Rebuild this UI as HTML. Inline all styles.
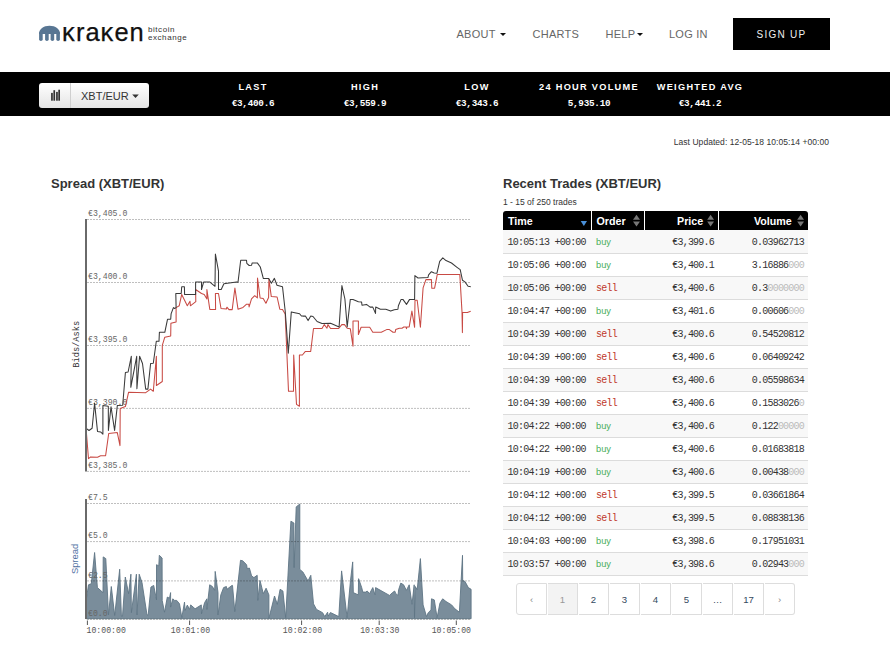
<!DOCTYPE html>
<html>
<head>
<meta charset="utf-8">
<style>
html,body{margin:0;padding:0;background:#fff;}
body{width:890px;height:672px;overflow:hidden;position:relative;font-family:"Liberation Sans",sans-serif;color:#333;}
.abs{position:absolute;}
.nav{position:absolute;top:28px;font-size:11px;color:#666;letter-spacing:0.25px;white-space:nowrap;line-height:13px;}
.caret{display:inline-block;width:0;height:0;border-left:2.6px solid transparent;border-right:2.6px solid transparent;border-top:3px solid #333;vertical-align:middle;margin-left:3px;position:relative;top:-1px;}
.signup{position:absolute;left:733px;top:18px;width:97px;height:32px;background:#000;color:#eee;font-size:10px;letter-spacing:1.25px;text-align:center;line-height:34px;}
.bar{position:absolute;left:0;top:72px;width:890px;height:44px;background:#000;}
.btn{position:absolute;left:39px;top:83px;width:110px;height:25px;border-radius:3px;background:linear-gradient(#ffffff,#e4e4e4);}
.btn .div{position:absolute;left:31px;top:0;width:1px;height:25px;background:#cfcfcf;}
.stat{position:absolute;top:81px;width:112px;text-align:center;color:#fff;}
.stat .l{font-weight:bold;font-size:9.2px;letter-spacing:1.3px;line-height:12px;height:12px;}
.stat .v{font-family:"Liberation Mono",monospace;font-weight:bold;font-size:9.3px;letter-spacing:-0.25px;line-height:12px;margin-top:5px;}
h2{position:absolute;margin:0;font-size:13px;font-weight:bold;color:#333;line-height:15px;white-space:nowrap;}
.chart{position:absolute;left:0;top:0;}
.grid{stroke:#000;stroke-opacity:0.25;stroke-width:1;stroke-dasharray:2,1;}
.axis{stroke:#6a6a6a;stroke-width:2;}
.tick{stroke:#555;stroke-width:1;}
.ylab{font-family:"Liberation Mono",monospace;font-size:8.2px;fill:#666;}
.xlab{font-family:"Liberation Mono",monospace;font-size:8.2px;fill:#555;}
.ytitle{font-family:"Liberation Mono",monospace;font-size:8.7px;fill:#333;}
.ytitle2{font-family:"Liberation Sans",sans-serif;font-size:9.4px;fill:#4f6f9f;}
.bid{fill:none;stroke:#3a3a3a;stroke-width:1.05;stroke-linejoin:round;}
.ask{fill:none;stroke:#c84a44;stroke-width:1.05;stroke-linejoin:round;}
.area{fill:#7a8d9b;stroke:#5f7585;stroke-width:0.9;}
.thead{position:absolute;left:503px;top:211px;width:305px;height:19px;background:#000;border-radius:3px 3px 0 0;}
.thead .sep{position:absolute;top:0;width:1.5px;height:19px;background:#fff;}
.th{position:absolute;top:0;line-height:20.5px;font-size:10.7px;font-weight:bold;color:#fff;white-space:nowrap;}
.sort{position:absolute;top:4px;width:7px;height:12px;}
.row{position:absolute;left:503px;width:305px;height:22px;border-bottom:1px solid #dcdcdc;font-size:9px;}
.row.odd{background:#f8f8f8;}
.row span{position:absolute;top:1px;line-height:22px;white-space:nowrap;}
.tm,.pr,.vo,.od.sell{font-family:"Liberation Mono",monospace;font-size:10px;letter-spacing:-0.78px;color:#333;}
.tm{left:4.5px;}
.od{left:93px;}
.od.buy{font-family:"Liberation Sans",sans-serif;font-size:9.3px;color:#4cae5b;top:0px !important;}
.od.sell{color:#c0392b;}
.pr{right:94px;}
.vo{right:4px;}
.z{position:static !important;color:#bbb;}
.pag{position:absolute;top:583px;height:31px;}
.pg{position:absolute;top:583px;width:29px;height:30px;border-top:1px solid #ddd;border-right:1px solid #ddd;border-bottom:1px solid #ddd;background:#fff;text-align:center;line-height:32.5px;font-size:9.6px;color:#34495e;}
</style>
</head>
<body>
<!-- logo -->
<svg class="abs" style="left:0;top:0" width="200" height="60" viewBox="0 0 200 60">
  <path d="M39,34 C39,29 43.5,25.8 49.5,25.8 C55.5,25.8 60,29 60,34 Z" fill="#587693"/>
  <g stroke="#587693" stroke-width="3.6" stroke-linecap="round">
    <line x1="40.9" y1="33" x2="40.9" y2="39.2"/>
    <line x1="46.9" y1="33" x2="46.9" y2="39.2"/>
    <line x1="52.4" y1="33" x2="52.4" y2="39.2"/>
    <line x1="58.1" y1="33" x2="58.1" y2="39.2"/>
  </g>
  <text x="62.1" y="40.5" font-family="Liberation Sans" font-size="25.5" fill="#111" stroke="#111" stroke-width="0.25" textLength="81.7" lengthAdjust="spacing">ĸraĸen</text>
  <text x="147.9" y="32" font-family="Liberation Sans" font-size="8" fill="#333" textLength="26.6" lengthAdjust="spacing">bitcoin</text>
  <text x="147.9" y="40" font-family="Liberation Sans" font-size="8" fill="#333" textLength="38.8" lengthAdjust="spacing">exchange</text>
</svg>

<!-- nav -->
<div class="nav" style="left:456.5px">ABOUT</div>
<div class="nav" style="left:532.5px">CHARTS</div>
<div class="nav" style="left:605.5px">HELP</div>
<svg class="abs" style="left:0;top:0" width="890" height="60" viewBox="0 0 890 60"><path d="M500,32.9 L506,32.9 L503,35.9 Z" fill="#111"/><path d="M637,32.9 L643,32.9 L640,35.9 Z" fill="#111"/></svg>
<div class="nav" style="left:669px">LOG IN</div>
<div class="signup">SIGN UP</div>

<!-- ticker bar -->
<div class="bar"></div>
<div class="btn"><div class="div"></div></div>
<svg class="abs" style="left:0;top:0" width="160" height="120" viewBox="0 0 160 120">
  <g fill="#333">
    <rect x="51.1" y="92.9" width="1.7" height="7.8"/>
    <rect x="53.4" y="90.2" width="1.7" height="10.5"/>
    <rect x="56.1" y="91.9" width="1.7" height="8.8"/>
    <rect x="58.3" y="89.7" width="1.7" height="11"/>
  </g>
  <text x="81" y="100" font-family="Liberation Sans" font-size="11" fill="#333">XBT/EUR</text>
  <path d="M132.2,94.5 L138.8,94.5 L135.5,98 Z" fill="#333"/>
</svg>
<div class="stat" style="left:197px"><div class="l">LAST</div><div class="v">€3,400.6</div></div>
<div class="stat" style="left:309px"><div class="l">HIGH</div><div class="v">€3,559.9</div></div>
<div class="stat" style="left:421px"><div class="l">LOW</div><div class="v">€3,343.6</div></div>
<div class="stat" style="left:533px"><div class="l">24 HOUR VOLUME</div><div class="v">5,935.10</div></div>
<div class="stat" style="left:644px"><div class="l">WEIGHTED AVG</div><div class="v">€3,441.2</div></div>

<div class="abs" style="right:61px;top:137px;font-size:8.5px;letter-spacing:0.05px;color:#333;line-height:11px;white-space:nowrap">Last Updated: 12-05-18 10:05:14 +00:00</div>

<h2 style="left:51px;top:176px">Spread (XBT/EUR)</h2>
<h2 style="left:503px;top:176px">Recent Trades (XBT/EUR)</h2>

<svg class="chart" width="890" height="672" viewBox="0 0 890 672">
<polygon points="86.2,618.7 86.2,600.4 88.5,584.8 91.3,583.7 94.6,552.5 97.4,587.6 103.0,592.6 103.2,556.9 105.8,558.6 108.5,614.9 111.3,586.5 114.7,615.5 119.7,569.2 121.4,616.1 122.5,616.1 125.3,577.0 128.6,593.7 130.9,574.2 131.4,612.7 136.4,574.2 137.0,614.9 139.2,574.2 142.0,582.6 147.0,614.9 148.2,614.9 150.9,587.1 153.7,585.4 156.5,599.9 156.5,564.7 158.8,565.9 159.3,555.3 162.1,558.0 162.2,600.4 164.5,612.2 167.3,597.1 169.5,598.2 170.6,592.6 170.6,607.1 172.8,598.8 174.5,600.4 176.7,600.4 179.5,603.8 181.8,617.7 184.5,602.1 185.1,610.5 187.3,605.1 189.6,609.4 190.7,604.9 195.1,608.8 201.3,604.9 201.5,613.8 204.6,602.7 206.9,598.8 206.9,609.4 209.7,584.8 212.4,586.5 214.7,590.4 215.2,571.4 218.0,592.6 218.0,614.9 220.8,594.9 223.6,587.6 226.4,586.5 226.9,589.3 232.0,585.4 232.5,585.4 234.8,611.6 240.5,560.3 242.7,560.8 246.6,564.7 247.2,568.6 249.4,568.1 251.6,575.9 253.9,577.6 257.2,575.3 257.8,600.4 260.0,580.4 263.3,593.7 266.1,588.2 268.9,594.9 268.9,618.3 274.5,596.0 277.3,604.3 280.1,589.3 282.9,591.0 285.7,617.7 290.9,521.2 293.9,523.0 294.1,567.6 296.2,506.9 299.8,504.0 299.8,569.4 302.9,572.0 308.0,580.9 310.8,575.3 313.5,603.8 316.5,609.4 322.6,612.7 324.8,616.6 327.6,612.2 328.2,616.1 330.4,612.5 338.8,616.6 341.6,570.9 347.1,617.7 350.5,580.4 352.7,561.9 353.3,592.6 358.3,594.9 358.6,578.7 361.7,587.6 362.8,592.1 365.6,592.1 367.2,591.0 369.5,593.7 372.8,587.6 375.0,594.9 375.6,587.6 389.5,595.4 392.5,592.6 394.7,591.0 395.8,593.7 398.0,595.4 398.6,589.8 400.8,583.1 403.6,584.8 406.4,590.4 409.2,584.8 412.0,604.3 414.2,584.8 414.5,617.7 415.3,586.5 417.2,589.8 420.4,558.6 423.1,604.9 426.5,616.6 428.2,612.7 431.0,609.9 431.5,598.8 434.3,599.9 437.1,617.7 439.9,603.2 442.7,598.8 446.0,601.5 451.6,604.9 454.9,608.8 459.4,612.2 462.5,555.3 462.7,580.4 465.0,581.5 468.3,587.6 471.1,589.3 471.1,618.7" class="area"/>
<line x1="87" y1="219.5" x2="471" y2="219.5" class="grid"/>
<line x1="87" y1="282.5" x2="471" y2="282.5" class="grid"/>
<line x1="87" y1="345.5" x2="471" y2="345.5" class="grid"/>
<line x1="87" y1="408.4" x2="471" y2="408.4" class="grid"/>
<line x1="87" y1="471.4" x2="471" y2="471.4" class="grid"/>
<line x1="87" y1="503.5" x2="471" y2="503.5" class="grid"/>
<line x1="87" y1="541.6" x2="471" y2="541.6" class="grid"/>
<line x1="87" y1="580.9" x2="471" y2="580.9" class="grid"/>
<line x1="87" y1="619.4" x2="471" y2="619.4" class="grid"/>
<text x="88" y="216.3" class="ylab">€3,405.0</text>
<text x="88" y="279.3" class="ylab">€3,400.0</text>
<text x="88" y="342.3" class="ylab">€3,395.0</text>
<text x="88" y="405.2" class="ylab">€3,390.0</text>
<text x="88" y="468.2" class="ylab">€3,385.0</text>
<text x="88" y="500.3" class="ylab">€7.5</text>
<text x="88" y="538.4" class="ylab">€5.0</text>
<text x="88" y="577.7" class="ylab">€2.5</text>
<text x="88" y="616.2" class="ylab">€0.0</text>
<polyline points="86.2,430.3 88.5,458.7 90.7,456.9 97.5,457.3 100.6,455.8 105.6,455.8 108.7,433.5 117.3,432.6 120.0,445.6 120.2,408.5 125.4,406.6 128.6,392.2 145.7,392.7 150.6,389.1 153.3,391.3 156.4,356.3 156.4,385.5 162.3,381.5 162.3,345.3 164.8,337.2 170.7,335.9 170.9,323.3 176.1,322.0 176.1,307.6 179.2,305.8 181.7,294.4 187.3,305.8 190.0,301.3 190.4,305.8 195.8,301.7 195.6,289.5 201.5,293.5 204.2,294.4 206.9,298.9 206.9,289.5 209.8,309.4 215.6,309.4 215.4,293.5 218.5,293.5 221.0,308.5 226.4,309.0 226.9,307.2 229.0,309.6 232.2,309.6 234.9,288.0 238.0,309.2 243.0,307.4 246.6,304.2 248.8,304.2 249.1,306.9 251.5,298.8 254.7,295.7 257.4,297.9 257.5,278.1 260.1,297.9 263.2,298.4 265.9,303.3 268.6,297.5 268.9,279.0 271.3,296.6 277.1,297.0 279.8,309.2 282.5,309.6 285.2,314.1 288.5,391.3 293.5,391.3 293.7,355.0 296.5,404.4 299.4,406.2 299.4,355.0 302.4,355.0 305.4,351.4 310.7,351.4 313.5,328.5 322.0,328.5 324.3,324.6 327.0,328.2 327.9,324.6 330.6,328.5 338.7,328.5 341.8,324.6 344.5,324.6 347.2,328.2 350.3,328.7 353.0,346.2 353.0,321.0 358.4,321.0 358.4,334.5 361.1,327.3 369.7,327.3 372.8,332.2 381.3,332.2 387.1,329.4 389.4,329.6 393.0,332.2 395.2,332.2 395.7,329.6 399.3,328.2 402.0,328.2 403.8,327.0 406.0,327.0 406.5,328.7 406.9,326.9 409.2,326.9 411.9,311.1 414.6,327.3 415.0,300.3 417.2,300.3 420.4,327.3 423.1,287.8 425.9,279.6 431.4,279.6 431.8,288.2 434.6,288.2 437.3,274.4 459.8,274.4 462.0,311.8 462.4,332.6 462.6,312.4 467.4,312.4 470.7,311.2" class="ask"/>
<polyline points="86.2,428.3 89.0,430.5 92.1,428.3 94.6,403.1 97.5,431.4 100.6,431.9 102.9,434.1 102.9,405.6 108.3,406.2 108.4,430.5 111.0,406.7 114.6,430.5 117.3,405.6 122.7,405.3 125.4,372.5 128.1,372.0 131.3,356.3 130.8,387.3 136.7,356.3 136.9,388.7 139.6,356.3 142.5,363.5 145.7,389.1 147.9,389.1 150.6,363.5 153.3,363.3 156.3,341.3 159.0,341.3 159.4,332.3 164.8,332.3 167.5,319.3 170.7,319.3 171.1,313.9 173.4,307.6 174.7,308.5 176.1,307.6 175.8,293.5 181.2,293.5 181.7,286.8 184.4,286.8 184.6,294.4 195.6,294.4 195.6,281.9 201.5,281.9 201.5,289.5 203.7,281.9 209.6,281.9 215.0,286.3 215.4,254.0 218.5,271.1 218.5,289.5 221.2,289.5 223.9,283.7 236.5,281.9 238.0,282.3 240.7,260.2 246.5,260.2 246.8,263.3 249.2,265.5 251.5,265.3 252.2,262.9 257.3,262.9 260.3,267.0 263.3,278.4 268.7,278.4 271.4,283.2 274.4,278.4 277.0,285.3 282.5,286.7 285.2,311.0 288.3,353.2 291.3,311.9 299.6,313.7 301.4,316.0 302.7,316.1 305.4,316.1 308.1,320.6 310.8,316.1 313.0,316.5 317.1,321.5 322.0,323.4 330.6,323.3 339.1,326.9 341.9,285.6 344.9,299.0 347.2,326.9 350.3,299.4 353.0,299.4 358.4,301.7 361.6,302.1 362.0,305.3 366.5,304.4 370.1,307.1 372.8,307.1 375.5,313.4 375.7,307.1 380.4,309.3 385.8,309.3 390.7,311.1 394.3,309.8 397.9,309.3 398.4,305.7 401.1,299.4 402.9,299.4 406.5,304.4 409.6,299.4 414.6,299.4 414.9,275.6 418.0,278.0 427.9,277.6 428.6,274.8 431.4,271.7 434.2,272.9 436.9,273.3 439.7,261.4 442.8,257.9 446.0,260.6 451.5,263.0 457.0,267.3 460.2,269.7 462.5,280.3 464.9,281.9 468.1,286.3 470.8,286.7" class="bid"/>
<line x1="86" y1="219" x2="86" y2="471.5" class="axis"/>
<line x1="86" y1="499" x2="86" y2="619" class="axis"/>
<line x1="87.4" y1="620.5" x2="87.4" y2="625" class="tick"/>
<text x="86.5" y="633" class="xlab" text-anchor="start">10:00:00</text>
<line x1="189.6" y1="620.5" x2="189.6" y2="625" class="tick"/>
<text x="190.5" y="633" class="xlab" text-anchor="middle">10:01:00</text>
<line x1="301.6" y1="620.5" x2="301.6" y2="625" class="tick"/>
<text x="302.5" y="633" class="xlab" text-anchor="middle">10:02:00</text>
<line x1="379.2" y1="620.5" x2="379.2" y2="625" class="tick"/>
<text x="379.8" y="633" class="xlab" text-anchor="middle">10:03:30</text>
<line x1="456.3" y1="620.5" x2="456.3" y2="625" class="tick"/>
<text x="471.0" y="633" class="xlab" text-anchor="end">10:05:00</text>
<text transform="translate(79.2,344.3) rotate(-90)" text-anchor="middle" class="ytitle">Bids/Asks</text>
<text transform="translate(77.8,559) rotate(-90)" text-anchor="middle" class="ytitle2">Spread</text>
</svg>

<div class="abs" style="left:503px;top:197px;font-size:8.5px;color:#333;line-height:11px;white-space:nowrap">1 - 15 of 250 trades</div>

<div class="abs" style="left:503px;top:230px;width:305px;height:1px;background:#f8f8f8"></div>
<div class="thead">
  <div class="sep" style="left:87.5px"></div>
  <div class="sep" style="left:140.5px"></div>
  <div class="sep" style="left:214.5px"></div>
</div>
<div class="th" style="left:508px;top:211px">Time</div>
<div class="th" style="left:596.5px;top:211px">Order</div>
<div class="th" style="left:677px;top:211px">Price</div>
<div class="th" style="left:754px;top:211px">Volume</div>
<svg class="abs" style="left:0;top:0" width="890" height="240" viewBox="0 0 890 240">
  <path d="M580.7,221 L587,221 L583.85,226 Z" fill="#4a90d9"/>
  <g fill="#777">
    <path d="M633,219.8 L640,219.8 L636.5,214.8 Z"/><path d="M633,221.5 L640,221.5 L636.5,226.5 Z"/>
    <path d="M707.2,219.8 L714,219.8 L710.6,214.8 Z"/><path d="M707.2,221.5 L714,221.5 L710.6,226.5 Z"/>
    <path d="M797.2,219.8 L804,219.8 L800.6,214.8 Z"/><path d="M797.2,221.5 L804,221.5 L800.6,226.5 Z"/>
  </g>
</svg>

<div class="row odd" style="top:231px"><span class="tm">10:05:13 +00:00</span><span class="od buy">buy</span><span class="pr">€3,399.6</span><span class="vo">0.03962713</span></div>
<div class="row" style="top:254px"><span class="tm">10:05:06 +00:00</span><span class="od buy">buy</span><span class="pr">€3,400.1</span><span class="vo">3.16886<span class="z">000</span></span></div>
<div class="row odd" style="top:277px"><span class="tm">10:05:06 +00:00</span><span class="od sell">sell</span><span class="pr">€3,400.6</span><span class="vo">0.3<span class="z">0000000</span></span></div>
<div class="row" style="top:300px"><span class="tm">10:04:47 +00:00</span><span class="od buy">buy</span><span class="pr">€3,401.6</span><span class="vo">0.00606<span class="z">000</span></span></div>
<div class="row odd" style="top:323px"><span class="tm">10:04:39 +00:00</span><span class="od sell">sell</span><span class="pr">€3,400.6</span><span class="vo">0.54520812</span></div>
<div class="row" style="top:346px"><span class="tm">10:04:39 +00:00</span><span class="od sell">sell</span><span class="pr">€3,400.6</span><span class="vo">0.06409242</span></div>
<div class="row odd" style="top:369px"><span class="tm">10:04:39 +00:00</span><span class="od sell">sell</span><span class="pr">€3,400.6</span><span class="vo">0.05598634</span></div>
<div class="row" style="top:392px"><span class="tm">10:04:39 +00:00</span><span class="od sell">sell</span><span class="pr">€3,400.6</span><span class="vo">0.1583026<span class="z">0</span></span></div>
<div class="row odd" style="top:415px"><span class="tm">10:04:22 +00:00</span><span class="od buy">buy</span><span class="pr">€3,400.6</span><span class="vo">0.122<span class="z">00000</span></span></div>
<div class="row" style="top:438px"><span class="tm">10:04:22 +00:00</span><span class="od buy">buy</span><span class="pr">€3,400.6</span><span class="vo">0.01683818</span></div>
<div class="row odd" style="top:461px"><span class="tm">10:04:19 +00:00</span><span class="od buy">buy</span><span class="pr">€3,400.6</span><span class="vo">0.00438<span class="z">000</span></span></div>
<div class="row" style="top:484px"><span class="tm">10:04:12 +00:00</span><span class="od sell">sell</span><span class="pr">€3,399.5</span><span class="vo">0.03661864</span></div>
<div class="row odd" style="top:507px"><span class="tm">10:04:12 +00:00</span><span class="od sell">sell</span><span class="pr">€3,399.5</span><span class="vo">0.08838136</span></div>
<div class="row" style="top:530px"><span class="tm">10:04:03 +00:00</span><span class="od buy">buy</span><span class="pr">€3,398.6</span><span class="vo">0.17951031</span></div>
<div class="row odd" style="top:553px"><span class="tm">10:03:57 +00:00</span><span class="od buy">buy</span><span class="pr">€3,398.6</span><span class="vo">0.02943<span class="z">000</span></span></div>

<div class="pg" style="left:516px;border-left:1px solid #ddd;border-radius:3px 0 0 3px;color:#888">‹</div>
<div class="pg" style="left:548px;background:#f3f3f3;color:#999">1</div>
<div class="pg" style="left:579px">2</div>
<div class="pg" style="left:610px">3</div>
<div class="pg" style="left:641px">4</div>
<div class="pg" style="left:672px">5</div>
<div class="pg" style="left:703px">…</div>
<div class="pg" style="left:734px">17</div>
<div class="pg" style="left:765px;border-radius:0 3px 3px 0;color:#888">›</div>

</body>
</html>
